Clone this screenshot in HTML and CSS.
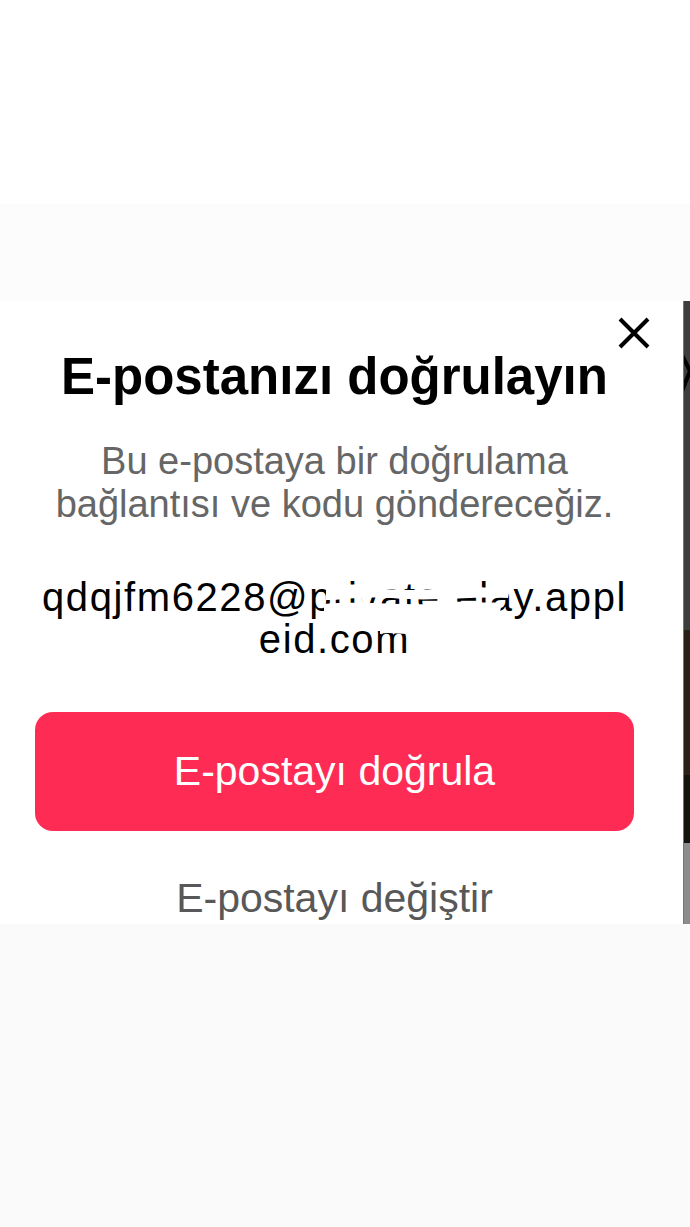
FILE: index.html
```html
<!DOCTYPE html>
<html lang="tr">
<head>
  <meta charset="UTF-8">
  <title>E-postanızı doğrulayın</title>
  <link rel="stylesheet" href="styles.css">
</head>
<body>

  <div class="top"></div>
  <div class="band"></div>

  <div class="sheet-row">
    <div class="sheet">
      <button class="close" aria-label="Kapat">
        <svg width="34" height="34" viewBox="0 0 34 34">
          <path d="M3 3 L31 31 M31 3 L3 31" stroke="#000" stroke-width="4" fill="none"/>
        </svg>
      </button>

      <h1 class="title">E-postanızı doğrulayın</h1>
      <p class="sub">Bu e-postaya bir doğrulama<br>bağlantısı ve kodu göndereceğiz.</p>

      <div class="email">
        <span>qdqjfm6228@privaterelay.appl</span><br><span>eid.com</span>
        <!-- hand-drawn redaction over the address -->
        <svg class="scribble" width="200" height="70" viewBox="0 0 200 70">
          <path d="M4 14 C40 8 80 18 120 12 C150 8 170 14 188 12 L186 22 C150 20 110 26 70 22 C40 20 20 24 4 24 Z" fill="#fff"/>
          <path d="M2 28 C50 24 90 32 130 26 C150 24 160 28 180 26 L178 36 C130 34 90 40 50 36 C30 34 18 38 2 38 Z" fill="#fff"/>
          <path d="M40 6 L46 40 M78 8 L84 40 M120 10 L126 38" stroke="#fff" stroke-width="6"/>
          <path d="M58 48 C64 46 72 50 86 48 L86 58 C74 58 66 56 58 58 Z" fill="#fff"/>
        </svg>
      </div>

      <button class="primary">E-postayı doğrula</button>
      <button class="link">E-postayı değiştir</button>
    </div>
    <div class="peek">
      <div class="peek-a">
        <svg class="peek-mark" width="8" height="40" viewBox="0 0 8 40">
          <path d="M0 2 L8 18 L0 38" stroke="#000" stroke-width="4" fill="none"/>
        </svg>
      </div>
      <div class="peek-b"></div>
      <div class="peek-c"></div>
      <div class="peek-d"></div>
    </div>
  </div>

</body>
</html>
```

FILE: styles.css
```css
body {
  margin: 0;
  background: #fafafa;
  font-family: "Liberation Sans", Arial, sans-serif;
}

.top {
  height: 204px;
  background: #fff;
}

.band {
  height: 97px;
  background: #fcfcfc;
}

.sheet-row {
  display: flex;
  height: 623px;
}

.sheet {
  flex: 1;
  position: relative;
  background: #fff;
  display: flex;
  flex-direction: column;
  align-items: center;
  padding: 46px 14px 0 0;
  box-sizing: border-box;
}

.close {
  position: absolute;
  top: 15px;
  right: 32px;
  border: none;
  background: none;
  padding: 0;
  width: 34px;
  height: 34px;
}

.title {
  margin: 0;
  font-size: 51px;
  line-height: 60px;
  font-weight: 700;
  color: #000;
  white-space: nowrap;
}

.sub {
  margin: 33px 0 0;
  font-size: 38px;
  line-height: 43px;
  color: #666;
  text-align: center;
  white-space: nowrap;
}

.email {
  position: relative;
  margin-top: 50px;
  font-size: 40px;
  line-height: 42px;
  letter-spacing: 1.6px;
  color: #000;
  text-align: center;
  white-space: nowrap;
}

.scribble {
  position: absolute;
  left: 280px;
  top: 0;
}

.primary {
  margin-top: 52px;
  width: 599px;
  height: 119px;
  flex-shrink: 0;
  border: none;
  border-radius: 18px;
  background: #fe2c55;
  color: #fff;
  font-family: inherit;
  font-size: 41px;
}

.link {
  margin-top: 44px;
  border: none;
  background: none;
  padding: 0;
  font-family: inherit;
  font-size: 41px;
  line-height: 46px;
  color: #585858;
}

.peek {
  width: 6px;
  display: flex;
  flex-direction: column;
  border-left: 1px solid #777;
  overflow: hidden;
}

.peek-a {
  height: 329px;
  background: #3d3d3d;
  padding-top: 52px;
  box-sizing: border-box;
}

.peek-mark {
  display: block;
  margin-left: -2px;
}

.peek-b {
  height: 145px;
  background: #2b2016;
}

.peek-c {
  height: 68px;
  background: #15120d;
}

.peek-d {
  flex: 1;
  background: #8c8c8c;
}
```
